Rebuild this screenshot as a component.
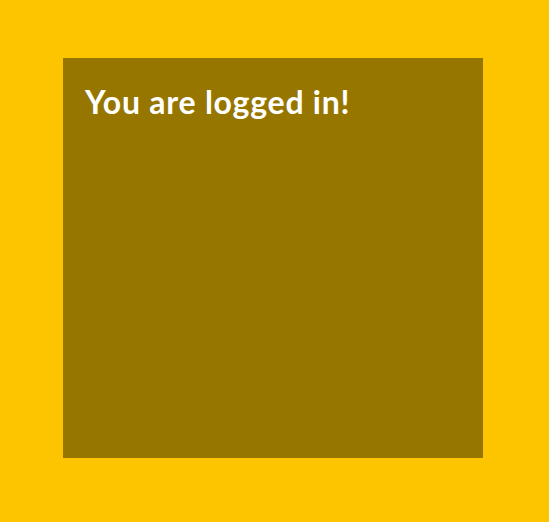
export default function App() {
  return (
    <div className="min-h-[522px] w-full bg-[#fcc500] pt-[58px] pl-[63px]">
      <div className="w-[420px] h-[400px] bg-[#977600] px-[22px] pt-[22px]">
        <h1 className="text-[32px] leading-[44px] tracking-[0.75px] font-bold text-white font-['Lato',sans-serif]">
          You are logged in!
        </h1>
      </div>
    </div>
  )
}
